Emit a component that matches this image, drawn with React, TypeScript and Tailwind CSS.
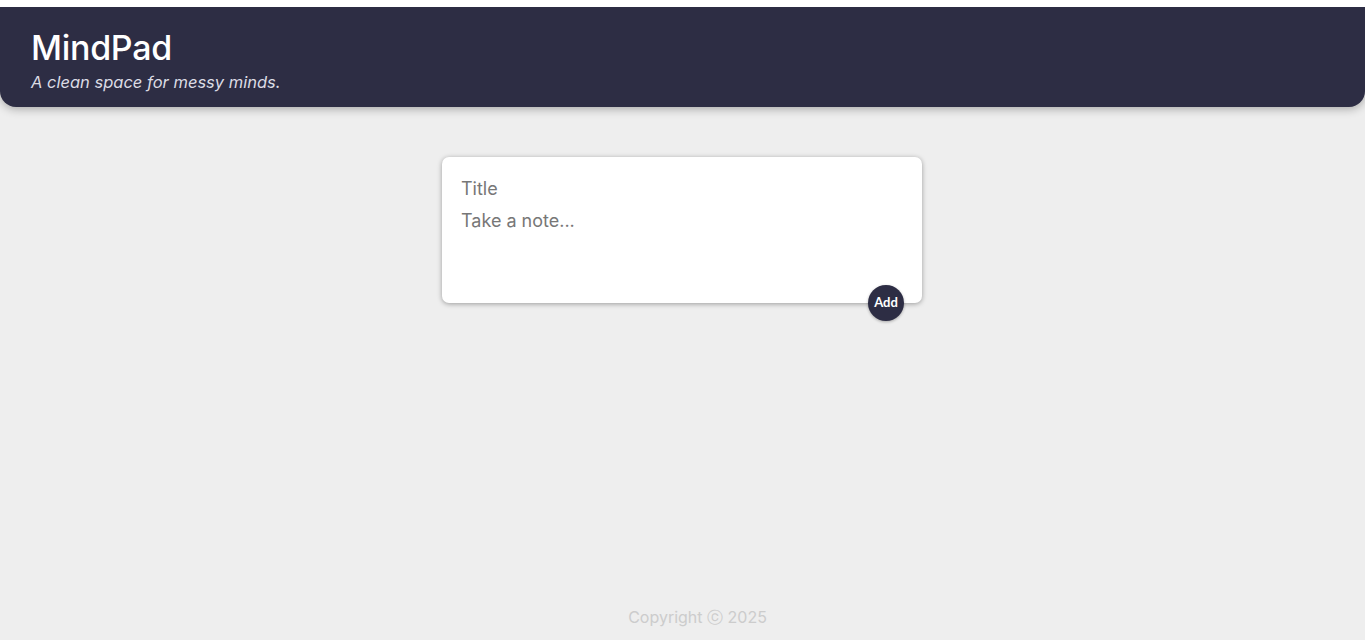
import React, { useState } from 'react';

const App = () => {
  const [title, setTitle] = useState('');
  const [content, setContent] = useState('');

  return (
    <div className="min-h-screen flex flex-col bg-[#eeeeee] font-['Inter',sans-serif]">
      <div className="relative z-10 h-[7px] bg-white" />
      <header className="bg-[#2d2d44] rounded-b-2xl shadow-[0_2px_10px_0_rgba(0,0,0,0.3)] px-[31px] pt-[22px] h-[100px]">
        <h1 className="text-white text-[34px] leading-[38px] font-medium tracking-[-0.3px]">MindPad</h1>
        <p className="text-[#dcdce4] italic text-[16.5px] leading-[22px] mt-[4px]">A clean space for messy minds.</p>
      </header>

      {/* Note form */}
      <main className="flex-1 flex justify-center pt-[50px] pr-px">
        <form className="relative w-[480px] h-[146px] bg-white rounded-[7px] shadow-[0_1px_5px_rgba(0,0,0,0.35)] px-[19px] pt-[19px]" onSubmit={(e) => e.preventDefault()}>
          <input
            value={title}
            onChange={(e) => setTitle(e.target.value)}
            placeholder="Title"
            className="block w-full outline-none text-[18px] leading-[26px] text-[#444] placeholder:text-[#777]"
          />
          <textarea
            value={content}
            onChange={(e) => setContent(e.target.value)}
            placeholder="Take a note..."
            rows={3}
            className="block w-full mt-[6px] outline-none resize-none text-[18px] leading-[26px] text-[#444] placeholder:text-[#777]"
          />
          <button
            type="submit"
            className="absolute right-[18px] bottom-[-18px] w-9 h-9 rounded-full bg-[#2d2d44] text-white text-[13px] font-bold font-['Lato',sans-serif] shadow-[0_1px_3px_rgba(0,0,0,0.3)]"
          >
            Add
          </button>
        </form>
      </main>

      <footer className="text-center text-[#cccccc] text-[16px] pb-[11px] pl-[30px]">
        Copyright ⓒ 2025
      </footer>
    </div>
  );
};

export default App;
